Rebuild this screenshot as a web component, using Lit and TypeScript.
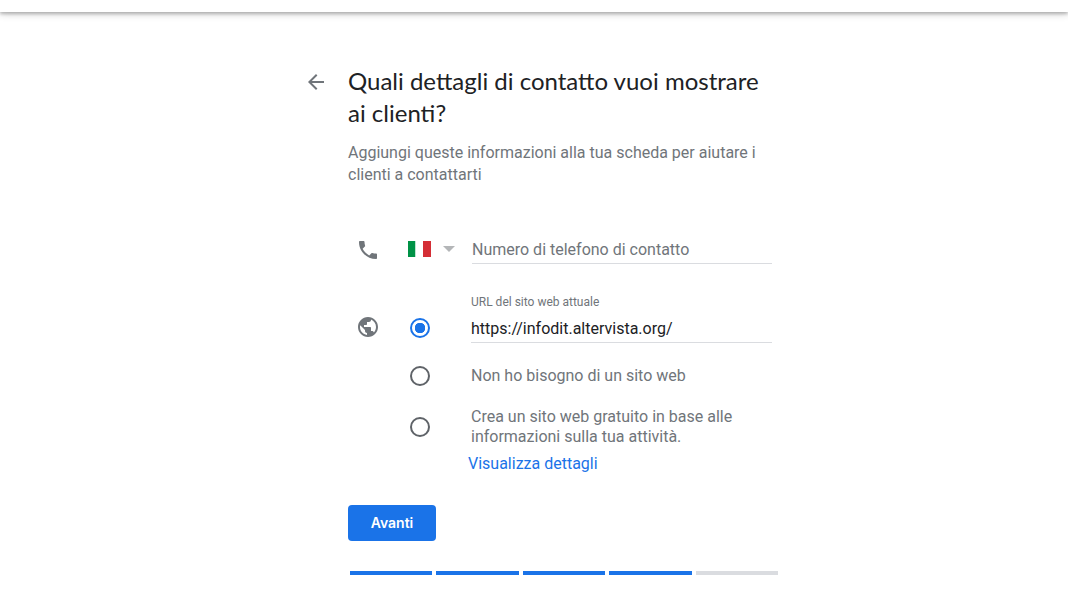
import { LitElement, html, css } from "lit";
import { customElement, property, state } from "lit/decorators.js";
import { classMap } from "lit/directives/class-map.js";

@customElement("step-progress")
class StepProgress extends LitElement {
  @property({ type: Number }) total = 5;
  @property({ type: Number }) done = 0;

  static styles = css`
    :host {
      display: flex;
      gap: 4px;
    }
    .step {
      flex: 1;
      height: 4px;
      background: #dadce0;
    }
    .done {
      background: #1a73e8;
    }
  `;

  render() {
    return Array.from(
      { length: this.total },
      (_, i) => html`<div class=${classMap({ step: true, done: i < this.done })}></div>`
    );
  }
}

@customElement("app-root")
class AppRoot extends LitElement {
  @state() private site = "current";

  static styles = css`
    :host {
      display: block;
      min-height: 100vh;
      background: #fff;
      color: #202124;
      font: 16px/20px Roboto, "Liberation Sans", sans-serif;
    }
    .topbar {
      height: 12px;
      background: #fff;
      box-shadow: 0 1px 8px rgba(0, 0, 0, 0.24), 0 2px 3px rgba(0, 0, 0, 0.2);
    }
    main {
      box-sizing: border-box;
      max-width: 488px;
      margin: 0 auto;
      padding: 53px 0 40px 14px;
      display: grid;
      grid-template-columns: 24px minmax(0, 1fr);
      column-gap: 20px;
      align-items: start;
    }
    button {
      border: 0;
      padding: 0;
      background: none;
      cursor: pointer;
    }
    svg {
      display: block;
    }
    .icon {
      width: 24px;
      height: 24px;
      fill: #70757a;
    }
    .back {
      padding: 5px 0;
    }
    h1 {
      margin: 0;
      font: 400 24px/32px "Google Sans", Lato, sans-serif;
    }
    .intro {
      margin: 13px 0 50px;
      line-height: 22px;
      color: #70757a;
    }
    .row {
      display: grid;
      padding: 0 6px 0 8px;
    }
    .phone {
      grid-template-columns: 52px 64px minmax(0, 1fr);
      align-items: center;
    }
    .website {
      grid-template-columns: 52px 63px minmax(0, 1fr);
    }
    .country {
      position: relative;
      display: flex;
      align-items: center;
      gap: 12px;
      height: 26px;
      align-self: start;
    }
    .country select {
      position: absolute;
      inset: 0;
      width: 48px;
      height: 100%;
      opacity: 0;
      cursor: pointer;
    }
    .field {
      box-sizing: border-box;
      width: 100%;
      height: 28px;
      padding: 0;
      border: 0;
      border-bottom: 1px solid #dadce0;
      border-radius: 0;
      outline: 0;
      background: none;
      color: #202124;
      font: inherit;
    }
    .field::placeholder {
      color: #70757a;
      opacity: 1;
    }
    .caption {
      grid-column: 3;
      margin: 30px 0 5px;
      font-size: 12px;
      line-height: 16px;
      color: #70757a;
    }
    .options {
      grid-column: 2 / 4;
      display: grid;
      gap: 20px;
      margin-top: 22px;
    }
    .option {
      display: grid;
      grid-template-columns: 63px minmax(0, 1fr);
      align-items: center;
      min-height: 22px;
      color: #70757a;
      cursor: pointer;
    }
    .radio {
      appearance: none;
      box-sizing: border-box;
      width: 20px;
      height: 20px;
      margin: 0 2px;
      border: 2px solid #5f6368;
      border-radius: 50%;
      cursor: pointer;
    }
    .radio:checked {
      border-color: #1a73e8;
      background: radial-gradient(circle, #1a73e8 0 5px, transparent 5.5px);
    }
    .current {
      margin-top: 3px;
    }
    .details {
      display: block;
      width: fit-content;
      margin: 7px 0 31px 120px;
      color: #1a73e8;
      text-decoration: none;
    }
    .next {
      display: block;
      min-width: 88px;
      height: 36px;
      margin-bottom: 30px;
      padding: 0 16px;
      border-radius: 4px;
      background: #1a73e8;
      color: #fff;
      font: 600 14px/20px "Google Sans", Inter, sans-serif;
    }
    step-progress {
      margin-left: 2px;
    }
  `;

  private radio(value: string, id: string) {
    return html`<input
      class=${classMap({ radio: true, current: value === "current" })}
      type="radio"
      name="site"
      id=${id}
      .checked=${this.site === value}
      @change=${() => (this.site = value)}
      aria-labelledby=${value === "current" ? "url-label" : id + "-label"}
    />`;
  }

  render() {
    return html`
      <header class="topbar"></header>
      <main>
        <button class="back" type="button" aria-label="Indietro">
          <svg class="icon" viewBox="0 0 24 24">
            <path d="M20 11H7.83l5.59-5.59L12 4l-8 8 8 8 1.41-1.41L7.83 13H20v-2z" />
          </svg>
        </button>
        <form @submit=${(e: Event) => e.preventDefault()}>
          <h1>Quali dettagli di contatto vuoi mostrare ai clienti?</h1>
          <p class="intro">
            Aggiungi queste informazioni alla tua scheda per aiutare i clienti a contattarti
          </p>

          <div class="row phone">
            <svg class="icon" viewBox="0 0 24 24">
              <path
                d="M6.62 10.79c1.44 2.83 3.76 5.14 6.59 6.59l2.2-2.2c.27-.27.67-.36 1.02-.24 1.12.37 2.33.57 3.57.57.55 0 1 .45 1 1V20c0 .55-.45 1-1 1-9.39 0-17-7.61-17-17 0-.55.45-1 1-1h3.5c.55 0 1 .45 1 1 0 1.25.2 2.45.57 3.57.11.35.03.74-.25 1.02l-2.2 2.2z"
              />
            </svg>
            <div class="country">
              <svg width="23" height="16" viewBox="0 0 23 16">
                <path fill="#009246" d="M0 0h7.5v16H0z" />
                <path fill="#fff" d="M7.5 0h7.5v16H7.5z" />
                <path fill="#d42e36" d="M15 0h8v16h-8z" />
              </svg>
              <svg width="12" height="6" viewBox="0 0 12 6">
                <path fill="#b4b6b8" d="M0 0h12L6 6z" />
              </svg>
              <select aria-label="Paese">
                <option>Italia</option>
              </select>
            </div>
            <input
              class="field"
              type="tel"
              aria-label="Numero di telefono di contatto"
              placeholder="Numero di telefono di contatto"
            />
          </div>

          <div class="row website">
            <label class="caption" id="url-label" for="url">URL del sito web attuale</label>
            <svg class="icon" viewBox="0 0 24 24">
              <path
                d="M12 2C6.48 2 2 6.48 2 12s4.48 10 10 10 10-4.48 10-10S17.52 2 12 2zm-1 17.93c-3.95-.49-7-3.85-7-7.93 0-.62.08-1.21.21-1.79L9 15v1c0 1.1.9 2 2 2v1.93zm6.9-2.54c-.26-.81-1-1.39-1.9-1.39h-1v-3c0-.55-.45-1-1-1H8v-2h2c.55 0 1-.45 1-1V7h2c1.1 0 2-.9 2-2v-.41c2.93 1.19 5 4.06 5 7.41 0 2.08-.8 3.97-2.1 5.39z"
              />
            </svg>
            ${this.radio("current", "site-current")}
            <input class="field" id="url" type="url" .value=${"https://infodit.altervista.org/"} />
            <div class="options">
              <label class="option" for="site-none">
                ${this.radio("none", "site-none")}
                <span id="site-none-label">Non ho bisogno di un sito web</span>
              </label>
              <label class="option" for="site-free">
                ${this.radio("free", "site-free")}
                <span id="site-free-label"
                  >Crea un sito web gratuito in base alle informazioni sulla tua attività.</span
                >
              </label>
            </div>
          </div>
          <a class="details" href="#dettagli">Visualizza dettagli</a>

          <button class="next" type="submit">Avanti</button>
          <step-progress total="5" done="4"></step-progress>
        </form>
      </main>
    `;
  }
}
